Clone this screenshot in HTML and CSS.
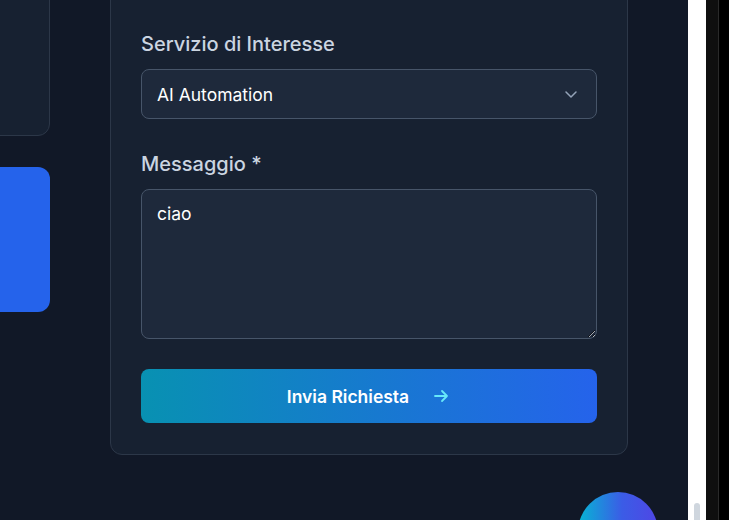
FILE: index.html
```html
<!DOCTYPE html>
<html lang="it">
<head>
<meta charset="utf-8">
<title>Contatti</title>
<link rel="stylesheet" href="styles.css">
</head>
<body>
<div class="frame">
  <div class="viewport">
    <div class="layout">
      <aside class="side">
        <div class="side-card"></div>
        <div class="side-cta"></div>
      </aside>
      <form class="form-card">
        <div class="field">
          <label class="label" for="svc">Servizio di Interesse</label>
          <div class="select" id="svc">
            <span>AI Automation</span>
            <svg class="chev" width="20" height="20" viewBox="0 0 20 20" fill="none" stroke="currentColor" stroke-width="1.5" stroke-linecap="round" stroke-linejoin="round"><path d="M5 8l5 5 5-5"/></svg>
          </div>
        </div>
        <div class="field">
          <label class="label" for="msg">Messaggio *</label>
          <textarea id="msg" class="textarea">ciao</textarea>
        </div>
        <button type="button" class="submit">
          <span>Invia Richiesta</span>
          <svg class="arrow" width="20" height="20" viewBox="0 0 20 20" fill="none" stroke="currentColor" stroke-width="1.8" stroke-linecap="round" stroke-linejoin="round"><path d="M4 10h12M11 5l5 5-5 5"/></svg>
        </button>
      </form>
    </div>
    <div class="fab"></div>
  </div>
  <div class="scroll-strip"><div class="thumb"></div></div>
  <div class="edge-dark"></div>
  <div class="edge-black"></div>
</div>
</body>
</html>
```
FILE: styles.css
```css
* { box-sizing: border-box; }
html, body { margin: 0; padding: 0; }
body {
  width: 729px;
  height: 520px;
  overflow: hidden;
  background: #000;
  font-family: Inter, "Noto Sans", sans-serif;
}
.frame {
  display: flex;
  width: 729px;
  height: 520px;
}
.viewport {
  position: relative;
  width: 688px;
  height: 520px;
  background: #111827;
  overflow: hidden;
  flex: none;
}
.scroll-strip {
  position: relative;
  width: 18px;
  height: 520px;
  background: #ffffff;
  flex: none;
}
.thumb {
  position: absolute;
  left: 6px;
  top: 503px;
  width: 6px;
  height: 30px;
  border-radius: 3px;
  background: #cfd6de;
}
.edge-dark {
  width: 13px;
  height: 520px;
  background: #0f0f0f;
  border-right: 1px solid #2a2a2a;
  flex: none;
}
.edge-black {
  flex: 1;
  background: #000;
}
.layout {
  display: flex;
  gap: 60px;
  margin-left: -250px;
  margin-top: -60px;
  align-items: flex-start;
}
.side {
  width: 300px;
  display: flex;
  flex-direction: column;
  gap: 31px;
  flex: none;
}
.side-card {
  height: 196px;
  background: rgba(30, 41, 59, 0.5);
  border: 1px solid #2c3748;
  border-radius: 12px;
}
.side-cta {
  height: 145px;
  background: #2563eb;
  border-radius: 12px;
}
.form-card {
  width: 518px;
  flex: none;
  background: rgba(30, 41, 59, 0.5);
  border: 1px solid #2c3748;
  border-radius: 12px;
  padding: 88px 30px 31px;
  display: flex;
  flex-direction: column;
  gap: 30px;
}
.field {
  display: flex;
  flex-direction: column;
}
.label {
  font-size: 20px;
  line-height: 30px;
  font-weight: 500;
  color: #cbd5e1;
  margin-bottom: 10px;
}
.select {
  height: 50px;
  background: #1e293b;
  border: 1px solid #475569;
  border-radius: 8px;
  padding: 0 15px 0 15px;
  display: flex;
  align-items: center;
  justify-content: space-between;
  color: #ffffff;
  font-size: 17.5px;
}
.chev { color: #94a3b8; }
.textarea {
  display: block;
  width: 100%;
  height: 150px;
  background: #1e293b;
  border: 1px solid #475569;
  border-radius: 8px;
  padding: 11px 15px;
  color: #ffffff;
  font-family: inherit;
  font-size: 17.5px;
  line-height: 26px;
  resize: vertical;
  outline: none;
  color-scheme: dark;
}
.submit {
  height: 54px;
  width: 100%;
  border: none;
  border-radius: 8px;
  background: linear-gradient(90deg, #0891b2, #2563eb);
  color: #ffffff;
  font-family: inherit;
  font-size: 17.5px;
  font-weight: 600;
  display: flex;
  align-items: center;
  justify-content: center;
  gap: 22px;
  padding: 0;
}
.arrow { color: #67e8f9; }
.fab {
  position: absolute;
  left: 578px;
  top: 492px;
  width: 80px;
  height: 80px;
  border-radius: 50%;
  background: linear-gradient(90deg, #06b6d4, #3b5ce6 55%, #4f46e5);
}
```
